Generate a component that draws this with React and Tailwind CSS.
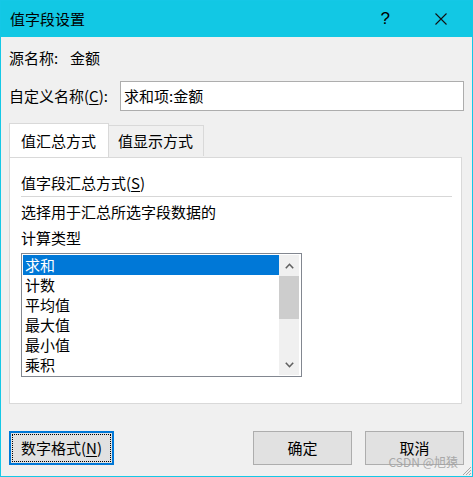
const FONT = { fontFamily: '"Microsoft YaHei UI","Noto Sans CJK SC","Noto Sans",sans-serif' };

const ITEMS = ["求和", "计数", "平均值", "最大值", "最小值", "乘积"];

function Chevron({ up }) {
  return (
    <svg width="9" height="6" viewBox="0 0 9 6">
      <path
        d={up ? "M0.8 5.2 L4.5 1.3 L8.2 5.2" : "M0.8 0.8 L4.5 4.7 L8.2 0.8"}
        fill="none"
        stroke="#606060"
        strokeWidth="1.6"
      />
    </svg>
  );
}

export default function App() {
  return (
    <div
      style={FONT}
      className="relative w-[473px] h-[477px] border border-[#14c8e6] bg-[#f0f0f0] flex flex-col text-[15px] text-black overflow-hidden"
    >
      {/* title bar */}
      <div className="h-[36px] bg-[#12c8e4] flex items-center pl-[9px] shrink-0">
        <span className="leading-[20px]">值字段设置</span>
        <span className="ml-auto mr-[45px] text-[17px] leading-[20px] font-light" style={{ fontFamily: '"Liberation Sans",sans-serif' }}>?</span>
        <svg className="mr-[25px]" width="12" height="12" viewBox="0 0 12 12">
          <path d="M0.5 0.5 L11.5 11.5 M11.5 0.5 L0.5 11.5" stroke="#111" strokeWidth="1.1" />
        </svg>
      </div>

      {/* source name */}
      <div className="mt-[11px] h-[20px] flex items-center pl-[8px] leading-[20px]">
        <span className="w-[61px]">源名称:</span>
        <span>金额</span>
      </div>

      {/* custom name */}
      <div className="mt-[13px] h-[30px] flex items-center pl-[8px]">
        <span className="w-[111px] leading-[20px]">
          自定义名称(<span className="underline underline-offset-2">C</span>):
        </span>
        <div className="w-[344px] h-[30px] bg-white border border-[#adadad] flex items-center pl-[3px] leading-[20px]">
          求和项:金额
        </div>
      </div>

      {/* tabs */}
      <div className="mt-[13px] ml-[8px] flex items-end h-[33px] relative z-10">
        <div className="w-[100px] h-[34px] bg-white border border-b-0 border-[#d9d9d9] flex items-center pl-[11px] leading-[20px]">
          值汇总方式
        </div>
        <div className="w-[95px] h-[31px] mb-[1px] bg-[#f0f0f0] border border-l-0 border-b-0 border-[#d9d9d9] flex items-center pl-[9px] leading-[20px]">
          值显示方式
        </div>
      </div>

      {/* tab panel */}
      <div className="ml-[8px] w-[453px] h-[247px] bg-white border border-[#d9d9d9] flex flex-col pl-[11px] pr-[9px]">
        <div className="mt-[15px] leading-[20px]">
          值字段汇总方式(<span className="underline underline-offset-2">S</span>)
        </div>
        <div className="mt-[3px] h-px bg-[#d7d7d7]" />
        <div className="mt-[2px] leading-[26px]">
          <div>选择用于汇总所选字段数据的</div>
          <div>计算类型</div>
        </div>
        <div className="mt-[2px] w-[281px] h-[124px] border border-[#828790] p-px flex bg-white">
          <div className="w-[256px] flex flex-col">
            {ITEMS.map((it, i) => (
              <div
                key={it}
                className={`h-[20px] leading-[20px] pl-[2px] ${i === 0 ? "bg-[#0078d7] text-white" : ""}`}
              >
                {it}
              </div>
            ))}
          </div>
          <div className="w-[20px] bg-[#f0f0f0] flex flex-col">
            <div className="h-[21px] flex items-center justify-center">
              <Chevron up />
            </div>
            <div className="h-[43px] bg-[#cdcdcd]" />
            <div className="flex-1" />
            <div className="h-[21px] flex items-center justify-center">
              <Chevron />
            </div>
          </div>
        </div>
      </div>

      {/* buttons */}
      <div className="mt-[27px] ml-[8px] mr-[8px] flex h-[34px]">
        <div className="w-[105px] h-[34px] border-2 border-[#0078d7] bg-[#e1e1e1] p-px">
          <div className="w-full h-full border border-dotted border-black flex items-center justify-center leading-[16px]">
            数字格式(<span className="underline underline-offset-2">N</span>)
          </div>
        </div>
        <div className="ml-auto w-[99px] h-[34px] border border-[#adadad] bg-[#e1e1e1] flex items-center justify-center leading-[16px]">
          确定
        </div>
        <div className="ml-[13px] w-[99px] h-[34px] border border-[#adadad] bg-[#e1e1e1] flex items-center justify-center leading-[16px]">
          取消
        </div>
      </div>

      {/* watermark */}
      <div className="absolute right-[14px] bottom-[8px] text-[12px] leading-[12px] text-[#a0a0a0]/90">
        CSDN @旭猿
      </div>

      {/* resize grip */}
      <svg className="absolute right-0 bottom-0" width="12" height="12" viewBox="0 0 12 12">
        <path d="M11 3 L3 11 M11 6 L6 11 M11 9 L9 11" stroke="#a8a8a8" strokeWidth="1" />
      </svg>
    </div>
  );
}
